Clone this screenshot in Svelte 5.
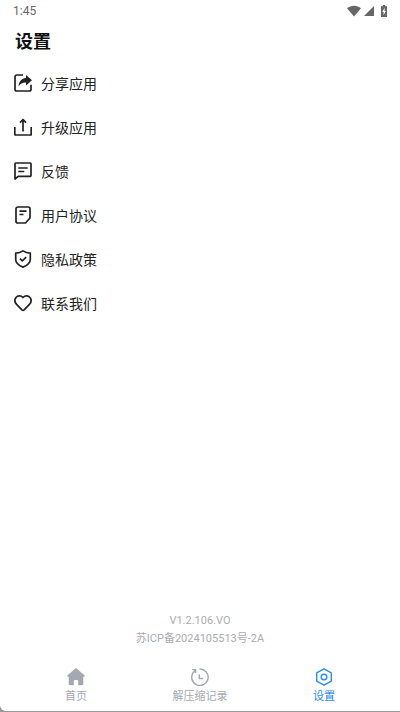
<script>
  const menu = [
    { id: "share", label: "分享应用" },
    { id: "upgrade", label: "升级应用" },
    { id: "feedback", label: "反馈" },
    { id: "agreement", label: "用户协议" },
    { id: "privacy", label: "隐私政策" },
    { id: "contact", label: "联系我们" },
  ];

  const tabs = [
    { id: "home", label: "首页" },
    { id: "history", label: "解压缩记录" },
    { id: "settings", label: "设置" },
  ];

  let activeTab = $state("settings");
</script>

<div class="screen">
  <div class="status-bar">
    <span>1:45</span>
    <div class="status-icons">
      <svg width="14" height="12" viewBox="0 0 14 12" aria-hidden="true">
        <path d="M0 3.2C4 -.2 10 -.2 14 3.2L7 11.5z" fill="currentColor" />
      </svg>
      <svg width="10" height="12" viewBox="0 0 10 12" aria-hidden="true">
        <path d="M10 1v10H0z" fill="currentColor" />
      </svg>
      <svg class="battery" width="6" height="12" viewBox="0 0 6 12" aria-hidden="true">
        <path d="M1.8 0h2.4v1.2H6V12H0V1.2h1.8z" fill="currentColor" />
        <path d="M3.6 2.8L1.2 7h1.4v3.2L4.9 6H3.6z" fill="#fff" />
      </svg>
    </div>
  </div>

  <main>
    <h1>设置</h1>
    <ul class="menu">
      {#each menu as item (item.id)}
        <li>
          <button class="menu-item">
            <svg width="18" height="18" viewBox="0 0 18 18" aria-hidden="true">
              {#if item.id === "share"}
                <path d="M9 1H2.8A1.8 1.8 0 0 0 1 2.8v12.4A1.8 1.8 0 0 0 2.8 17h12.4a1.8 1.8 0 0 0 1.8-1.8v-4.4" />
                <path class="solid" d="M12 1l6 5.2-6 5.2V8.6C9 8.4 6.500 9.500 4.600 12.400C4.900 7.700 7.600 4.500 12 4.100z" />
              {:else if item.id === "upgrade"}
                <path d="M.8 9v8h16.400V9M9 13.500V1.500M6 4.600L9 1.500l3 3.100" />
              {:else if item.id === "feedback"}
                <path d="M1 17V1.800a.8.8 0 0 1 .8-.8h14.400a.8.8 0 0 1 .8.8v11.700a.8.8 0 0 1-.8.8H4.200zM4.300 6h9.400M4.300 9.500h6" />
              {:else if item.id === "agreement"}
                <path d="M3.800 1h10.400A1.800 1.800 0 0 1 16 2.800V12l-4.500 5H3.800A1.800 1.800 0 0 1 2 15.200V2.800A1.800 1.800 0 0 1 3.800 1zM5.500 5.200h7M5.500 8.500h4" />
              {:else if item.id === "privacy"}
                <path d="M9 .9c2.100 1.400 4.500 2.100 7.300 2.300v6.200c0 3.400-3.100 5.900-7.300 7.700C4.800 15.300 1.700 12.800 1.700 9.400V3.200C4.500 3 6.900 2.300 9 .9zM5.900 8.600l2.400 2.300 3.900-3.800" />
              {:else}
                <path d="M9 3.500C6.900 1.100 3.600 1.400 2 3.500C.4 5.700.8 8.500 2.600 10.400L7.900 15.800q1.100 1 2.200 0l5.300-5.400c1.800-1.900 2.200-4.700.6-6.900C14.400 1.400 11.100 1.100 9 3.500z" />
              {/if}
            </svg>
            {item.label}
          </button>
        </li>
      {/each}
    </ul>
  </main>

  <footer>
    <p>V1.2.106.VO</p>
    <p>苏ICP备2024105513号-2A</p>
  </footer>

  <nav>
    {#each tabs as tab (tab.id)}
      <button
        class="tab"
        class:active={activeTab === tab.id}
        aria-current={activeTab === tab.id ? "page" : undefined}
        onclick={() => (activeTab = tab.id)}
      >
        <svg width="18" height="18" viewBox="0 0 18 18" aria-hidden="true">
          {#if tab.id === "home"}
            <path class="solid" d="M8.300.6q.7-.6 1.400 0l7.700 6.700q1 1.200-.4 1.400h-.7v7.200q0 1.400-1.400 1.400h-3.700v-4.100q0-1.200-1.200-1.200H8q-1.200 0-1.200 1.200v4.100H3.100q-1.400 0-1.400-1.400V8.700H1Q-.4 8.500.6 7.300z" />
          {:else if tab.id === "history"}
            <path d="M8.500 1A8.200 8.200 0 1 1 2.200 4.500L4.500 2M1.200 1.600h3.400v3.400M8.300 6.200v4.300h4" />
          {:else}
            <path d="M9 .8l7.300 4.100v8.200L9 17.200l-7.300-4.100V4.900z" />
            <circle cx="9" cy="9" r="2.800" />
          {/if}
        </svg>
        {tab.label}
      </button>
    {/each}
  </nav>
</div>

<style>
  :global(body) {
    margin: 0;
    background: #999;
  }

  .screen {
    display: flex;
    flex-direction: column;
    min-height: calc(100vh - 1px);
    background: #fff;
    border-bottom-left-radius: 6px;
    font-family: Roboto, "Noto Sans CJK SC", sans-serif;
    color: #222;
  }

  .status-bar {
    display: flex;
    justify-content: space-between;
    align-items: center;
    height: 22px;
    padding: 0 13px;
    font-size: 12px;
    color: #666;
  }

  .status-icons {
    display: flex;
    align-items: center;
    gap: 3px;
  }

  .battery {
    margin-left: 4px;
  }

  main {
    flex: 1;
  }

  h1 {
    margin: 0;
    padding: 7px 15px 6px;
    font-size: 18px;
    line-height: 26px;
    font-weight: 700;
    color: #111;
  }

  .menu {
    margin: 0;
    padding: 0;
    list-style: none;
  }

  button {
    border: none;
    background: none;
    font-family: inherit;
    cursor: pointer;
  }

  .menu-item {
    display: flex;
    align-items: center;
    gap: 9px;
    width: 100%;
    height: 44px;
    padding: 0 14px;
    font-size: 14px;
    color: inherit;
    text-align: left;
  }

  svg {
    display: block;
    fill: none;
    stroke: currentColor;
    stroke-width: 1.7;
    stroke-linejoin: round;
  }

  .solid {
    fill: currentColor;
    stroke: none;
  }

  .status-bar svg {
    stroke: none;
  }

  footer {
    padding-bottom: 13px;
    text-align: center;
    font-size: 11px;
    line-height: 18px;
    color: #aaacb2;
  }

  footer p {
    margin: 0;
  }

  nav {
    display: grid;
    grid-template-columns: repeat(3, 1fr);
    padding: 7px 14px 6px;
  }

  .tab {
    display: flex;
    flex-direction: column;
    align-items: center;
    gap: 3px;
    padding: 0;
    font-size: 11px;
    line-height: 16px;
    color: #a5a8b0;
  }

  .tab svg {
    stroke-width: 1.4;
  }

  .tab.active {
    color: #2b8af8;
  }
</style>
